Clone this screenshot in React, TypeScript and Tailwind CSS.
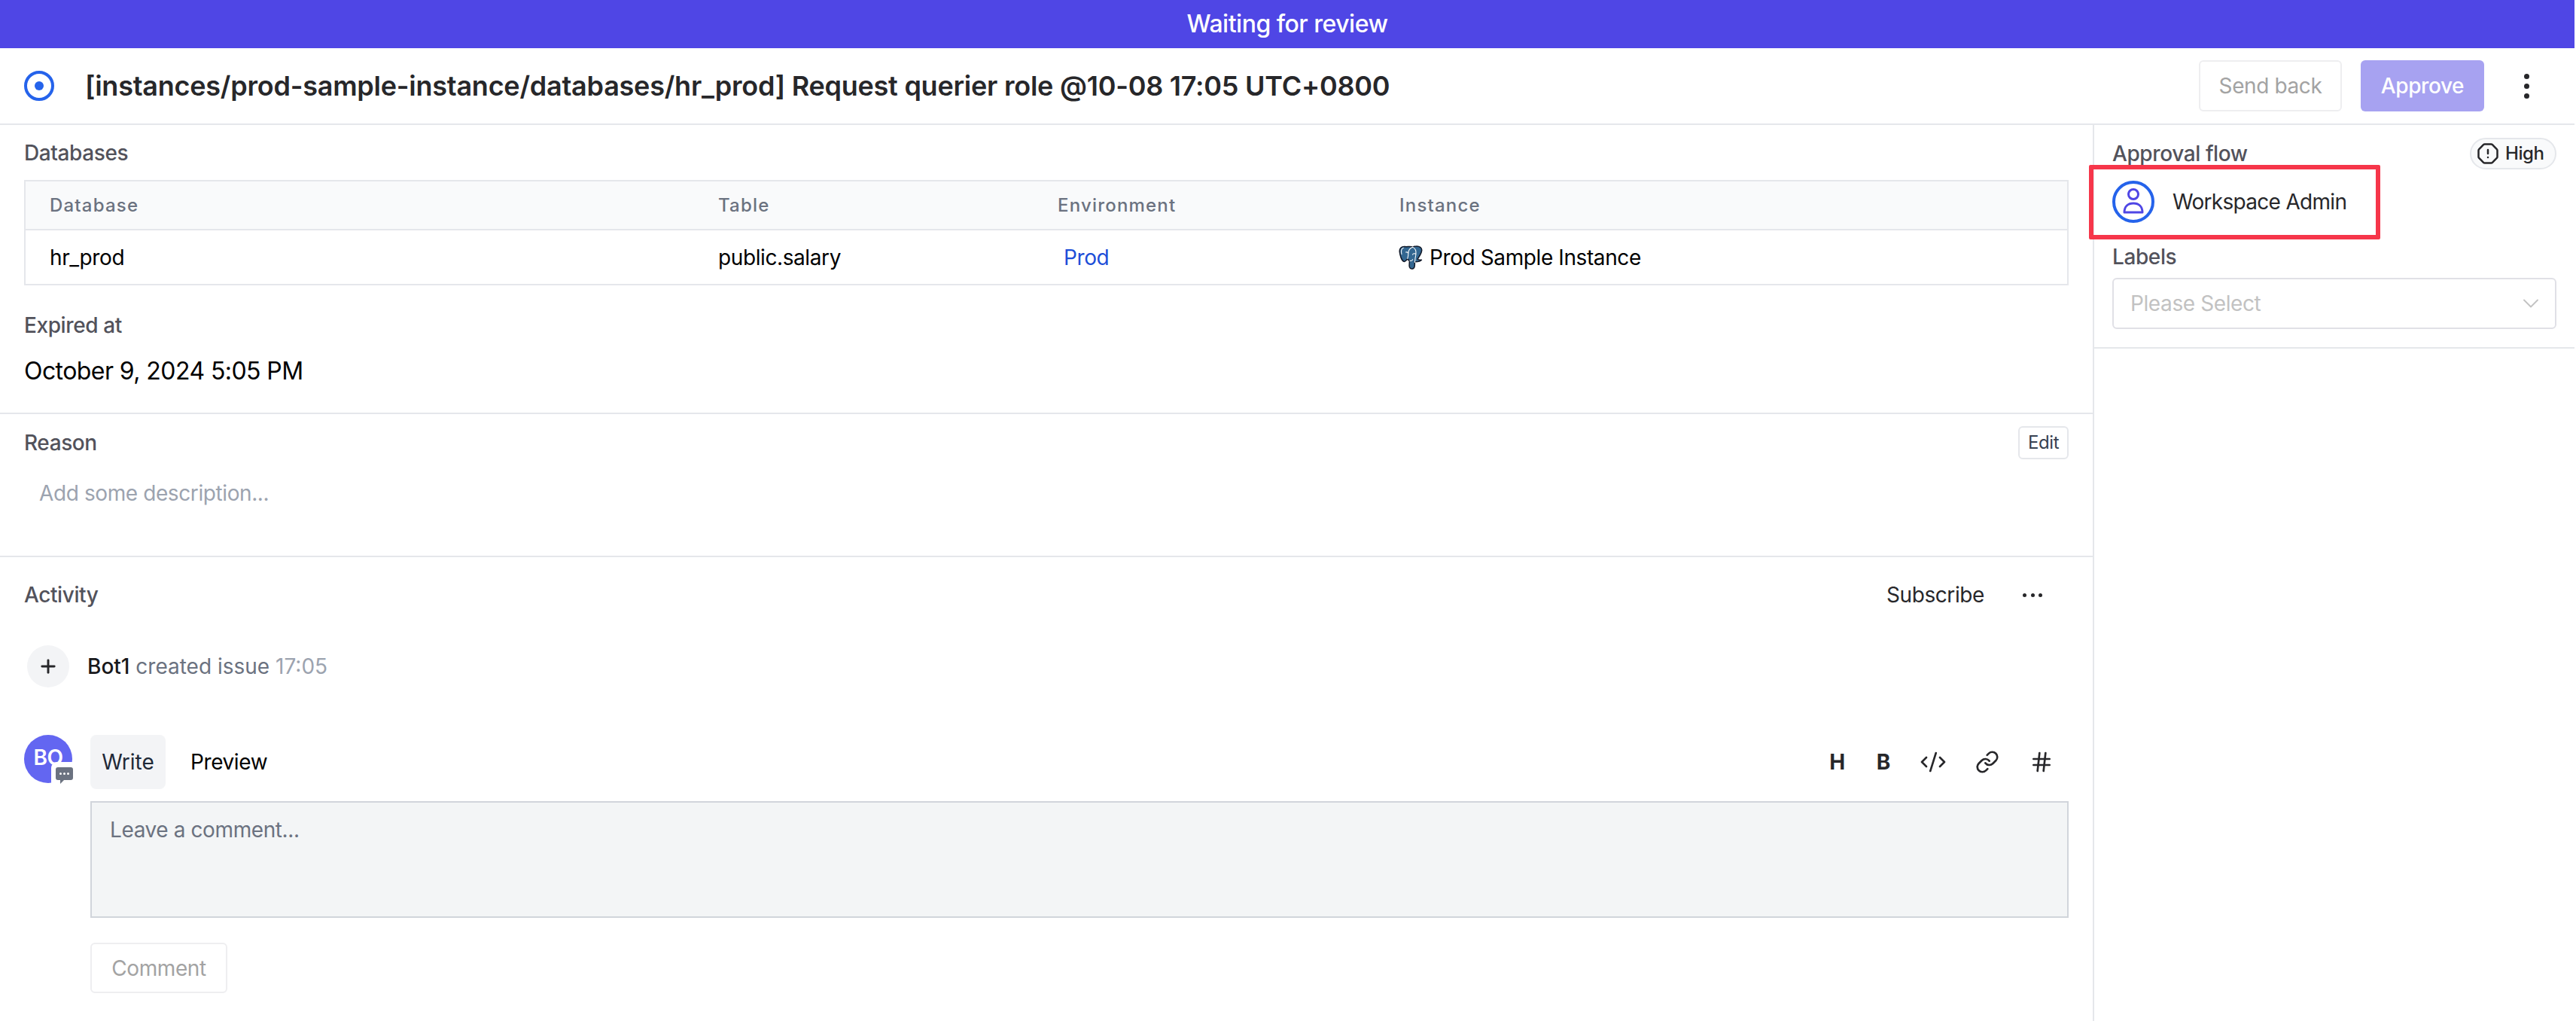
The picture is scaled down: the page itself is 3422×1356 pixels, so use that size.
import React from 'react';
import { ChevronDown, CodeXml, Hash, Link, OctagonAlert, Plus } from 'lucide-react';

const columns = ['Database', 'Table', 'Environment', 'Instance'];

const PostgresIcon: React.FC = () => (
  <svg className="w-8 h-8 -ml-px shrink-0" viewBox="0 0 30 30">
    <path
      d="M8 1.5C3 1 .8 4 1.2 8c.4 4 2.3 11 5.3 12 2 .5 3.5-2 4.5-3.500.5 1.500 1.500 2.300 2.500 2.500l-.3 6c0 3 1.800 4.500 4.300 4 2-.5 2.500-2.500 2.500-5v-3.500c2 0 7 0 8.500-2.500-1.500 0-4 .5-5-1 2-3 5-7 5.300-11 .2-3-2.800-5.200-6.800-5-2 0-3.500.5-4.500 1-2.500-1.200-6.500-.2-9.500-.5z"
      fill="#336791"
      stroke="#111827"
      strokeWidth="1.400"
      strokeLinejoin="round"
    />
    <path
      d="M17.500 2c-3 1-5.500 4-5.500 8 0 3-.5 5-1 6.500M17.500 2c3 1.500 4.500 5 4 9-.3 2.500-1 4-1 6.500 0 1.500-.5 3-.5 3.500M12 10c-.5-1.500-2-2-3-1.500M21.500 11c-1.500-1.500-4-1-4 .5M6 3c-3 .5-3 5-2.300 8M14 19c2 .5 3 0 3.500-1.500"
      fill="none"
      stroke="#ffffff"
      strokeWidth="1"
      strokeLinecap="round"
    />
  </svg>
);

const SectionLabel: React.FC<{ children: React.ReactNode }> = ({ children }) => (
  <div className="text-[28px] leading-10 font-medium text-[#52525b]">{children}</div>
);

const App: React.FC = () => {
  return (
    <div className="h-[1356px] flex flex-col bg-white pr-[2px] overflow-hidden tracking-[-0.4px] font-['Inter',sans-serif]">
      {/* status banner */}
      <div className="h-16 shrink-0 flex items-center justify-center bg-[#4f46e5] text-white text-[32px] tracking-[-0.5px] font-medium">
        Waiting for review
      </div>

      {/* issue header */}
      <div className="h-[102px] shrink-0 flex items-center pl-8 pr-[60px] border-b-2 border-[#e5e7eb]">
        <svg className="w-10 h-10 shrink-0" viewBox="0 0 40 40">
          <circle cx="20" cy="20" r="18" fill="none" stroke="#2563eb" strokeWidth="4" />
          <circle cx="20" cy="20" r="6" fill="#2563eb" />
        </svg>
        <h1 className="ml-[41px] text-[36px] leading-[48px] tracking-[-0.24px] font-semibold text-[#27272a]">
          [instances/prod-sample-instance/databases/hr_prod] Request querier role @10-08 17:05 UTC+0800
        </h1>
        <div className="ml-auto flex items-center">
          <button className="w-[190px] h-[68px] border-2 border-[#eeeef0] rounded-md text-[28px] text-[#a3a3a3]">
            Send back
          </button>
          <button className="ml-[25px] w-[164px] h-[68px] rounded-md bg-[#a7a2f1] text-[28px] font-medium text-white">
            Approve
          </button>
          <div className="ml-[52px] w-2 flex flex-col items-center gap-[6px]">
            <span className="w-[7px] h-[7px] rounded-full bg-[#27272a]" />
            <span className="w-[7px] h-[7px] rounded-full bg-[#27272a]" />
            <span className="w-[7px] h-[7px] rounded-full bg-[#27272a]" />
          </div>
        </div>
      </div>

      <div className="flex flex-1 min-h-0">
        {/* main column */}
        <div className="w-[2780px] shrink-0 border-r-2 border-[#e5e7eb] box-content">
          <div className="px-8 pt-[17px] pb-[31px] border-b-2 border-[#e5e7eb]">
            <SectionLabel>Databases</SectionLabel>
            <div className="mt-4 border-2 border-[#e5e7eb]">
              <div className="h-[65px] grid grid-cols-[920px_451px_454px_1fr] items-center bg-[#f9fafb] border-b-2 border-[#e5e7eb] text-2xl font-medium tracking-wider text-[#6b7280]">
                {columns.map((c, i) => (
                  <div key={c} className={i === 0 ? 'pl-8' : ''}>
                    {c}
                  </div>
                ))}
              </div>
              <div className="h-[71px] grid grid-cols-[920px_451px_454px_1fr] items-center text-[28px] text-black">
                <div className="pl-8">hr_prod</div>
                <div>public.salary</div>
                <div className="pl-2 text-[#1d4ed8]">Prod</div>
                <div className="flex items-center gap-[9px]">
                  <PostgresIcon />
                  <span>Prod Sample Instance</span>
                </div>
              </div>
            </div>
            <div className="mt-[33px]">
              <SectionLabel>Expired at</SectionLabel>
            </div>
            <div className="mt-[17px] text-[32px] leading-[48px] tracking-[-0.57px] text-black">October 9, 2024 5:05 PM</div>
          </div>

          <div className="px-8 pt-4 pb-[63px] border-b-2 border-[#e5e7eb]">
            <div className="h-11 flex items-center justify-between">
              <SectionLabel>Reason</SectionLabel>
              <button className="w-[67px] h-11 border-2 border-[#e5e7eb] rounded-md text-2xl text-[#374151]">Edit</button>
            </div>
            <div className="mt-[25px] ml-5 text-[28px] leading-10 text-[#9ca3af]">Add some description...</div>
          </div>

          <div className="px-8 pt-[30px]">
            <div className="h-10 flex items-center justify-between">
              <SectionLabel>Activity</SectionLabel>
              <div className="flex items-center">
                <span className="text-[28px] text-[#27272a]">Subscribe</span>
                <div className="ml-[51px] mr-[35px] w-[26px] flex items-center justify-between">
                  <span className="w-[5px] h-[5px] rounded-full bg-[#27272a]" />
                  <span className="w-[5px] h-[5px] rounded-full bg-[#27272a]" />
                  <span className="w-[5px] h-[5px] rounded-full bg-[#27272a]" />
                </div>
              </div>
            </div>

            <div className="mt-[47px] ml-1 flex items-center">
              <div className="w-14 h-14 rounded-full bg-[#f3f4f6] flex items-center justify-center">
                <Plus className="w-7 h-7 text-[#27272a]" strokeWidth={2.5} />
              </div>
              <div className="ml-6 text-[28px] tracking-normal text-[#6b7280]">
                <span className="font-medium text-[#18181b]">Bot1</span> created issue{' '}
                <span className="text-[#9ca3af]">17:05</span>
              </div>
            </div>

            <div className="mt-[63px] flex gap-6">
              <div className="relative w-16 h-16 shrink-0 pb-1 rounded-full bg-[#6366f1] flex items-center justify-center text-white text-[28px] font-semibold">
                BO
                <div className="absolute left-9 top-9 w-[30px] h-[30px] pr-px pb-px rounded-tl-lg bg-white flex items-end justify-end">
                  <svg className="w-[23px] h-[23px]" viewBox="0 0 23 23">
                    <path d="M3 1h17a3 3 0 0 1 3 3v11a3 3 0 0 1-3 3H11l-5 5v-5H3a3 3 0 0 1-3-3V4a3 3 0 0 1 3-3z" fill="#6b7280" />
                    <circle cx="6.500" cy="9.500" r="1.500" fill="#fff" />
                    <circle cx="11.500" cy="9.500" r="1.500" fill="#fff" />
                    <circle cx="16.500" cy="9.500" r="1.500" fill="#fff" />
                  </svg>
                </div>
              </div>

              <div className="flex-1 min-w-0">
                <div className="h-[72px] flex items-center">
                  <div className="h-[72px] w-[100px] flex items-center justify-center rounded-lg bg-[#f3f4f6] text-[28px] tracking-normal text-[#1f2937]">Write</div>
                  <div className="ml-[33px] text-[28px] text-black">Preview</div>
                  <div className="ml-auto flex items-center pr-5 text-[#27272a]">
                    <span className="text-[28px] font-bold">H</span>
                    <span className="ml-[42px] text-[28px] font-bold">B</span>
                    <CodeXml className="ml-[39px] w-9 h-9" strokeWidth={1.75} />
                    <Link className="ml-[38px] w-8 h-8" strokeWidth={2} />
                    <Hash className="ml-10 w-8 h-8" strokeWidth={2} />
                  </div>
                </div>
                <div className="mt-4 h-[155px] border-2 border-[#d1d5db] bg-[#f3f5f6] px-6 py-4 text-[28px] leading-10 text-[#6b7280]">
                  Leave a comment...
                </div>
                <button className="mt-[33px] w-[182px] h-[67px] border-2 border-[#eeeef0] rounded-md text-[28px] text-[#a3a3a3]">
                  Comment
                </button>
              </div>
            </div>
          </div>
        </div>

        {/* sidebar */}
        <div className="flex-1 min-w-0">
          <div className="px-6 pt-[17px] pb-6 border-b-2 border-[#e5e7eb]">
            <div className="h-[42px] flex items-center justify-between">
              <SectionLabel>Approval flow</SectionLabel>
              <div className="h-[42px] w-[115px] flex items-center gap-2 pl-[7px] rounded-full border-2 border-[#e5e7eb] bg-[#f9fafb] text-2xl font-medium text-[#27272a]">
                <OctagonAlert className="w-[30px] h-[30px]" strokeWidth={2} />
                High
              </div>
            </div>
            <div className="relative mt-[15px] flex items-center gap-6">
              <div className="w-14 h-14 rounded-full border-4 border-[#2563eb] flex items-center justify-center">
                <svg className="w-8 h-9" viewBox="0 0 32 36" fill="none" stroke="#4f46e5" strokeWidth="3">
                  <circle cx="16" cy="8" r="6.500" />
                  <path d="M4 32c0-8 5-12 12-12s12 4 12 12z" strokeLinejoin="round" />
                </svg>
              </div>
              <span className="text-[28px] tracking-[-0.7px] text-[#27272a]">Workspace Admin</span>
              <div className="absolute -left-[31px] -top-[21px] w-[387px] h-[99px] border-[6px] border-[#f6364a] rounded-[2px]" />
            </div>
            <div className="mt-[25px]">
              <SectionLabel>Labels</SectionLabel>
            </div>
            <div className="mt-2 h-[68px] flex items-center justify-between pl-[22px] pr-[14px] border-2 border-[#e0e0e6] rounded-md">
              <span className="text-[28px] text-[#c2c2c2]">Please Select</span>
              <ChevronDown className="w-9 h-9 text-[#c2c2c2]" strokeWidth={1.25} />
            </div>
          </div>
        </div>
      </div>
    </div>
  );
};

export default App;
